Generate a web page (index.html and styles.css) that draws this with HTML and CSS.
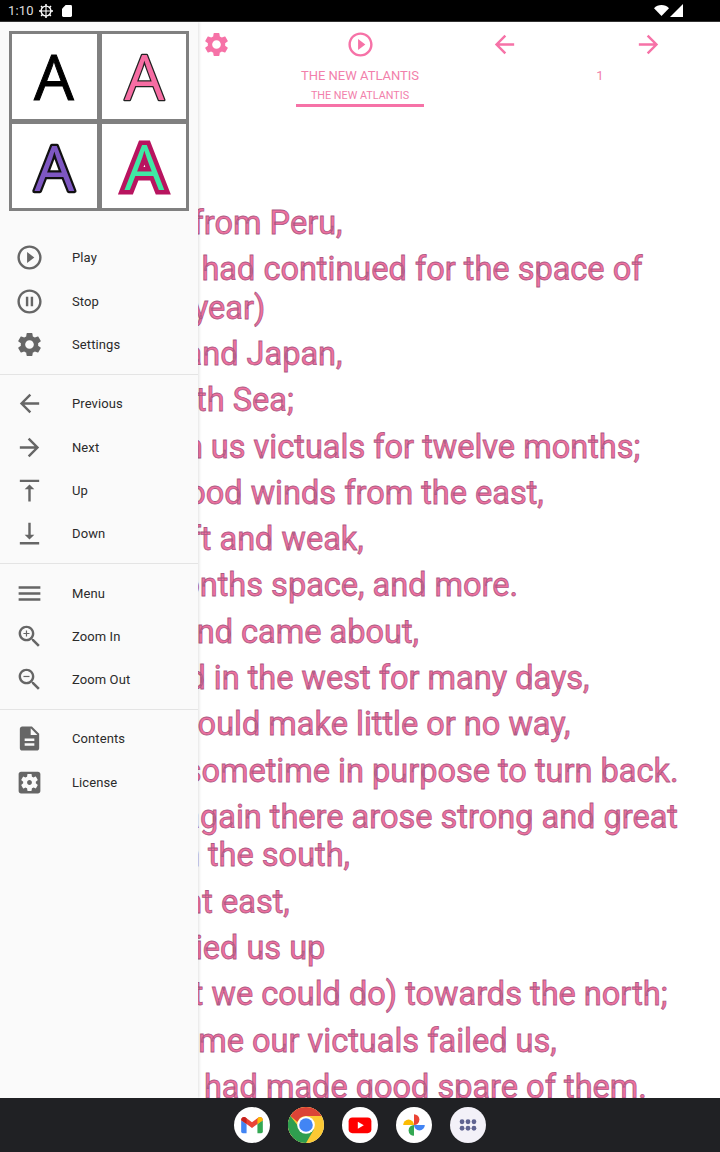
FILE: index.html
```html
<!DOCTYPE html>
<html lang="en">
<head>
<meta charset="utf-8">
<title>The New Atlantis</title>
<link rel="stylesheet" href="styles.css">
</head>
<body>
<svg class="defs" width="0" height="0" aria-hidden="true">
  <symbol id="i-play" viewBox="0 0 24 24"><path d="M10 16.5l6-4.5-6-4.5v9zM12 2C6.48 2 2 6.48 2 12s4.48 10 10 10 10-4.48 10-10S17.52 2 12 2zm0 18c-4.41 0-8-3.59-8-8s3.59-8 8-8 8 3.59 8 8-3.59 8-8 8z"/></symbol>
  <symbol id="i-pause" viewBox="0 0 24 24"><path d="M9 16h2V8H9v8zm3-14C6.48 2 2 6.48 2 12s4.48 10 10 10 10-4.48 10-10S17.52 2 12 2zm0 18c-4.41 0-8-3.59-8-8s3.59-8 8-8 8 3.59 8 8-3.59 8-8 8zm1-4h2V8h-2v8z"/></symbol>
  <symbol id="i-gear" viewBox="0 0 24 24"><path d="M19.14 12.94c.04-.3.06-.61.06-.94 0-.32-.02-.64-.07-.94l2.03-1.58c.18-.14.23-.41.12-.61l-1.92-3.32c-.12-.22-.37-.29-.59-.22l-2.39.96c-.5-.38-1.03-.7-1.62-.94l-.36-2.54c-.04-.24-.24-.41-.48-.41h-3.84c-.24 0-.43.17-.47.41l-.36 2.54c-.59.24-1.13.57-1.62.94l-2.39-.96c-.22-.08-.47 0-.59.22L2.74 8.87c-.12.21-.08.47.12.61l2.03 1.58c-.05.3-.09.63-.09.94s.02.64.07.94l-2.03 1.58c-.18.14-.23.41-.12.61l1.92 3.32c.12.22.37.29.59.22l2.39-.96c.5.38 1.03.7 1.62.94l.36 2.54c.05.24.24.41.48.41h3.84c.24 0 .44-.17.47-.41l.36-2.54c.59-.24 1.13-.56 1.62-.94l2.39.96c.22.08.47 0 .59-.22l1.92-3.32c.12-.22.07-.47-.12-.61l-2.01-1.58zM12 15.6c-1.98 0-3.6-1.62-3.6-3.6s1.62-3.6 3.6-3.6 3.6 1.62 3.6 3.6-1.62 3.6-3.6 3.6z"/></symbol>
  <symbol id="i-back" viewBox="0 0 24 24"><path d="M20 11H7.83l5.59-5.59L12 4l-8 8 8 8 1.41-1.41L7.83 13H20v-2z"/></symbol>
  <symbol id="i-next" viewBox="0 0 24 24"><path d="M4 11h12.17l-5.59-5.59L12 4l8 8-8 8-1.41-1.41L16.17 13H4v-2z"/></symbol>
  <symbol id="i-up" viewBox="0 0 24 24"><path d="M8 11h3v10h2V11h3l-4-4-4 4zM4 3v2h16V3H4z"/></symbol>
  <symbol id="i-down" viewBox="0 0 24 24"><path d="M16 13h-3V3h-2v10H8l4 4 4-4zM4 19v2h16v-2H4z"/></symbol>
  <symbol id="i-menu" viewBox="0 0 24 24"><path d="M3 18h18v-2H3v2zm0-5h18v-2H3v2zm0-7v2h18V6H3z"/></symbol>
  <symbol id="i-zoomin" viewBox="0 0 24 24"><path d="M15.5 14h-.79l-.28-.27C15.41 12.59 16 11.11 16 9.5 16 5.91 13.09 3 9.5 3S3 5.91 3 9.5 5.91 16 9.5 16c1.61 0 3.09-.59 4.23-1.57l.27.28v.79l5 4.99L20.49 19l-4.99-5zm-6 0C7.01 14 5 11.99 5 9.5S7.01 5 9.5 5 14 7.01 14 9.5 11.99 14 9.5 14z"/><path d="M12 10h-2v2H9v-2H7V9h2V7h1v2h2v1z"/></symbol>
  <symbol id="i-zoomout" viewBox="0 0 24 24"><path d="M15.5 14h-.79l-.28-.27C15.41 12.59 16 11.11 16 9.5 16 5.91 13.09 3 9.5 3S3 5.91 3 9.5 5.91 16 9.5 16c1.61 0 3.09-.59 4.23-1.57l.27.28v.79l5 4.99L20.49 19l-4.99-5zm-6 0C7.01 14 5 11.99 5 9.5S7.01 5 9.5 5 14 7.01 14 9.5 11.99 14 9.5 14z"/><path d="M7 9h5v1H7z"/></symbol>
  <symbol id="i-doc" viewBox="0 0 24 24"><path d="M14 2H6c-1.1 0-1.99.9-1.99 2L4 20c0 1.1.89 2 1.99 2H18c1.1 0 2-.9 2-2V8l-6-6zm2 16H8v-2h8v2zm0-4H8v-2h8v2zm-3-5V3.5L18.5 9H13z"/></symbol>
  <symbol id="i-license" viewBox="0 0 24 24"><path d="M12 10c-1.1 0-2 .9-2 2s.9 2 2 2 2-.9 2-2-.9-2-2-2zm7-7H5c-1.11 0-2 .9-2 2v14c0 1.1.89 2 2 2h14c1.11 0 2-.9 2-2V5c0-1.1-.89-2-2-2zm-1.75 9c0 .23-.02.46-.05.68l1.48 1.16c.13.11.17.3.08.45l-1.4 2.42c-.09.15-.27.21-.43.15l-1.74-.7c-.36.28-.76.51-1.18.69l-.26 1.85c-.03.17-.18.3-.35.3h-2.8c-.17 0-.32-.13-.35-.29l-.26-1.85c-.43-.18-.82-.41-1.18-.69l-1.74.7c-.16.06-.34 0-.43-.15l-1.4-2.42c-.09-.15-.05-.34.08-.45l1.48-1.16c-.03-.23-.05-.46-.05-.69 0-.23.02-.46.05-.68l-1.48-1.16c-.13-.11-.17-.3-.08-.45l1.4-2.42c.09-.15.27-.21.43-.15l1.74.7c.36-.28.76-.51 1.18-.69l.26-1.85c.03-.17.18-.3.35-.3h2.8c.17 0 .32.13.35.29l.26 1.85c.43.18.82.41 1.18.69l1.74-.7c.16-.06.34 0 .43.15l1.4 2.42c.09.15.05.34-.08.45l-1.48 1.16c.03.23.05.46.05.69z" fill-rule="evenodd"/></symbol>
</svg>

<header class="status">
  <div class="status-left">
    <span class="clock">1:10</span>
    <svg class="st-gear" viewBox="0 0 14 14"><circle cx="7" cy="7" r="4.900" fill="none" stroke="#fff" stroke-width="1.400"/><path d="M7 0v14M0 7h14M2 2l10 10M12 2L2 12" stroke="#fff" stroke-width="1.500" stroke-dasharray="2 10"/><path d="M2.300 7h9.400M7 2.300v9.400" stroke="#fff" stroke-width="1.100"/></svg>
    <svg class="st-sd" viewBox="0 0 11 13"><path d="M4 0h5.500A1.500 1.500 0 0 1 11 1.500v10A1.500 1.500 0 0 1 9.500 13h-8A1.500 1.500 0 0 1 0 11.500V4z" fill="#fff"/></svg>
  </div>
  <div class="status-right">
    <svg class="st-wifi" viewBox="0 0 15 11"><path d="M0 3.200C2 1.200 4.600 0 7.500 0s5.500 1.200 7.500 3.200L7.500 11z" fill="#fff"/></svg>
    <svg class="st-signal" viewBox="0 0 13 13"><path d="M13 0v13H0z" fill="#fff"/></svg>
  </div>
</header>

<div class="stage">
  <main class="reader">
    <div class="toolbar">
      <svg class="tool-icon"><use href="#i-menu"/></svg>
      <svg class="tool-icon"><use href="#i-gear"/></svg>
      <svg class="tool-icon"><use href="#i-play"/></svg>
      <svg class="tool-icon"><use href="#i-back"/></svg>
      <svg class="tool-icon"><use href="#i-next"/></svg>
    </div>
    <div class="tabs">
      <div class="tab-col"></div>
      <div class="tab-col">
        <div class="tab-title">THE NEW ATLANTIS</div>
        <div class="tab-sub">THE NEW ATLANTIS</div>
      </div>
      <div class="tab-col">
        <div class="tab-title">1</div>
      </div>
    </div>
    <article class="poem">
      <p>We sailed from Peru,</p>
      <p>(where we had continued for the space of the whole year)</p>
      <p>for China and Japan,</p>
      <p>by the South Sea;</p>
      <p>taking with us victuals for twelve months;</p>
      <p>and had good winds from the east,</p>
      <p>though soft and weak,</p>
      <p>for five months space, and more.</p>
      <p>And the wind came about,</p>
      <p>and settled in the west for many days,</p>
      <p>so as we could make little or no way,</p>
      <p>and were sometime in purpose to turn back.</p>
      <p>And then again there arose strong and great gales from the south,</p>
      <p>with a point east,</p>
      <p>which carried us up</p>
      <p>(for all that we could do) towards the north;</p>
      <p>by which time our victuals failed us,</p>
      <p>though we had made good spare of them.</p>
    </article>
  </main>

  <aside class="drawer">
    <div class="swatches">
      <svg class="swatch" viewBox="0 0 84.500 84.500"><text class="letter letter-black" x="42" y="66">A</text></svg>
      <svg class="swatch" viewBox="0 0 84.500 84.500"><text class="letter letter-pink" x="42.500" y="65.500">A</text></svg>
      <svg class="swatch" viewBox="0 0 84.500 84.500"><text class="letter letter-purple" x="42.500" y="66.500">A</text></svg>
      <svg class="swatch" viewBox="0 0 84.500 84.500"><text class="letter letter-green" x="42.500" y="66">A</text></svg>
    </div>
    <nav class="menu-group menu-first">
      <div class="menu-item"><svg class="menu-icon"><use href="#i-play"/></svg><span>Play</span></div>
      <div class="menu-item"><svg class="menu-icon"><use href="#i-pause"/></svg><span>Stop</span></div>
      <div class="menu-item"><svg class="menu-icon"><use href="#i-gear"/></svg><span>Settings</span></div>
    </nav>
    <nav class="menu-group">
      <div class="menu-item"><svg class="menu-icon"><use href="#i-back"/></svg><span>Previous</span></div>
      <div class="menu-item"><svg class="menu-icon"><use href="#i-next"/></svg><span>Next</span></div>
      <div class="menu-item"><svg class="menu-icon"><use href="#i-up"/></svg><span>Up</span></div>
      <div class="menu-item"><svg class="menu-icon"><use href="#i-down"/></svg><span>Down</span></div>
    </nav>
    <nav class="menu-group">
      <div class="menu-item"><svg class="menu-icon"><use href="#i-menu"/></svg><span>Menu</span></div>
      <div class="menu-item"><svg class="menu-icon"><use href="#i-zoomin"/></svg><span>Zoom In</span></div>
      <div class="menu-item"><svg class="menu-icon"><use href="#i-zoomout"/></svg><span>Zoom Out</span></div>
    </nav>
    <nav class="menu-group">
      <div class="menu-item"><svg class="menu-icon"><use href="#i-doc"/></svg><span>Contents</span></div>
      <div class="menu-item"><svg class="menu-icon"><use href="#i-license"/></svg><span>License</span></div>
    </nav>
  </aside>
</div>

<footer class="dock">
  <div class="dock-app">
    <svg viewBox="0 0 24 24" class="dock-icon"><path d="M2 7.500V18a1.500 1.500 0 0 0 1.500 1.500H7V11z" fill="#4285f4"/><path d="M22 7.500V18a1.500 1.500 0 0 1-1.500 1.500H17V11z" fill="#34a853"/><path d="M2 7.500C2 5.200 4.600 3.900 6.400 5.300L12 9.500l5.600-4.200C19.400 3.900 22 5.200 22 7.500L17 11l-5 3.800L7 11z" fill="#ea4335"/><path d="M17 6.400l.6-1.100C19.400 3.900 22 5.200 22 7.500L17 11z" fill="#fbbc04"/><path d="M2 7.500C2 5.200 4.600 3.900 6.400 5.300L7 5.800V11z" fill="#c5221f"/></svg>
  </div>
  <div class="dock-app">
    <svg viewBox="0 0 36 36" class="dock-full"><circle cx="18" cy="18" r="18" fill="#fcc934"/><path d="M18 0a18 18 0 0 1 15.600 9H18a9 9 0 0 0-8.500 6L2.400 9A18 18 0 0 1 18 0z" fill="#db4437"/><path d="M2.400 9A18 18 0 0 0 18 36l7.800-13.500-13.800-1z" fill="#2f9e4f"/><circle cx="18" cy="18" r="8.800" fill="#fff"/><circle cx="18" cy="18" r="6.800" fill="#4285f4"/></svg>
  </div>
  <div class="dock-app">
    <svg viewBox="0 0 24 24" class="dock-icon"><rect x="1.500" y="5" width="21" height="14.500" rx="3.500" fill="#f00"/><path d="M10 9v6.500l5.500-3.250z" fill="#fff"/></svg>
  </div>
  <div class="dock-app">
    <svg viewBox="0 0 24 24" class="dock-icon"><path d="M12 12V2a5 5 0 0 1 0 10z" fill="#ea4335"/><path d="M12 12h10a5 5 0 0 1-10 0z" fill="#4285f4"/><path d="M12 12v10a5 5 0 0 1 0-10z" fill="#34a853"/><path d="M12 12H2a5 5 0 0 1 10 0z" fill="#fbbc04"/></svg>
  </div>
  <div class="dock-app dock-apps">
    <svg viewBox="0 0 24 24" class="dock-icon"><g fill="#5f6391"><circle cx="6.500" cy="9" r="2.200"/><circle cx="12" cy="9" r="2.200"/><circle cx="17.500" cy="9" r="2.200"/><circle cx="6.500" cy="15" r="2.200"/><circle cx="12" cy="15" r="2.200"/><circle cx="17.500" cy="15" r="2.200"/></g></svg>
  </div>
</footer>
</body>
</html>
```
FILE: styles.css
```css
* { box-sizing: border-box; }
html, body { margin: 0; padding: 0; }
body {
  width: 720px;
  height: 1152px;
  overflow: hidden;
  display: flex;
  flex-direction: column;
  background: #fff;
  font-family: Roboto, "Noto Sans", sans-serif;
}
.defs { position: absolute; }

.status {
  height: 22px;
  flex: none;
  background: #000;
  border-bottom: 1px solid #333;
  display: flex;
  align-items: center;
  justify-content: space-between;
  padding: 0 37px 0 8px;
  color: #ddd;
}
.status-left, .status-right { display: flex; align-items: center; }
.clock { font-size: 13px; letter-spacing: .2px; width: 29px; }
.st-gear { width: 14px; height: 14px; margin-left: 2px; }
.st-sd { width: 10px; height: 12px; margin-left: 9px; }
.st-wifi { width: 15px; height: 11px; }
.st-signal { width: 13px; height: 13px; margin-left: 1px; margin-top: -1px; }

.stage { flex: 1; position: relative; overflow: hidden; min-height: 0; }
.reader { height: 100%; overflow: hidden; }

.toolbar { height: 44px; display: grid; grid-template-columns: repeat(5, 144px); justify-items: center; align-items: center; }
.tool-icon { width: 29px; height: 29px; fill: #f672a7; }

.tabs { display: grid; grid-template-columns: repeat(3, 240px); height: 42px; }
.tab-col { display: flex; flex-direction: column; align-items: center; }
.tab-title { font-size: 13px; line-height: 20px; color: #f27fab; }
.tab-sub {
  width: 128px;
  height: 21px;
  padding-top: 1px;
  text-align: center;
  font-size: 10.800px;
  line-height: 17px;
  color: #f27fab;
  border-bottom: 3px solid #f672a7;
}

.poem { padding: 96px 30px 0 45px; }
.poem p {
  margin: 0 0 7.900px;
  font-size: 32.500px;
  line-height: 38.400px;
  color: #f0719f;
  -webkit-text-stroke: .8px #ad5a84;
}

.drawer {
  position: absolute;
  left: 0;
  top: 0;
  bottom: 0;
  width: 198px;
  background: #fafafa;
  box-shadow: 1px 0 3px rgba(0, 0, 0, .12);
}
.swatches {
  width: 180px;
  height: 180px;
  margin: 9px 0 0 9px;
  padding: 3px;
  display: grid;
  grid-template-columns: 1fr 1fr;
  grid-template-rows: 1fr 1fr;
  gap: 5px;
  background: #808080;
}
.swatch { background: #fff; width: 100%; height: 100%; display: block; }
.letter {
  font-family: "Open Sans", Roboto, sans-serif;
  font-size: 63px;
  font-weight: 500;
  text-anchor: middle;
  paint-order: stroke fill;
}
.letter-black { fill: #000; stroke: #000; stroke-width: 1px; }
.letter-pink { fill: #f66da3; stroke: #222; stroke-width: 2.500px; stroke-linejoin: round; }
.letter-purple { fill: #7e57c2; stroke: #111; stroke-width: 4.500px; stroke-linejoin: round; }
.letter-green { fill: #3fe8a4; stroke: #b8145f; stroke-width: 9px; stroke-linejoin: miter; stroke-miterlimit: 2; }

.menu-group { padding: 7.700px 0; border-bottom: 1px solid #e4e4e4; }
.menu-group:last-child { border-bottom: none; }
.menu-first { margin-top: 17.700px; }
.menu-item { height: 43.200px; display: flex; align-items: center; font-size: 13px; letter-spacing: .1px; color: #2b2b2b; }
.menu-icon { width: 29px; height: 29px; margin: 0 28.500px 0 14.500px; fill: #666; flex: none; }

.dock {
  height: 54px;
  flex: none;
  background: #202124;
  display: flex;
  align-items: center;
  justify-content: center;
  gap: 18px;
}
.dock-app {
  width: 36px;
  height: 36px;
  border-radius: 50%;
  background: #fff;
  display: flex;
  align-items: center;
  justify-content: center;
}
.dock-apps { background: #f3f1f8; }
.dock-icon { width: 26px; height: 26px; }
.dock-full { width: 36px; height: 36px; }
```
